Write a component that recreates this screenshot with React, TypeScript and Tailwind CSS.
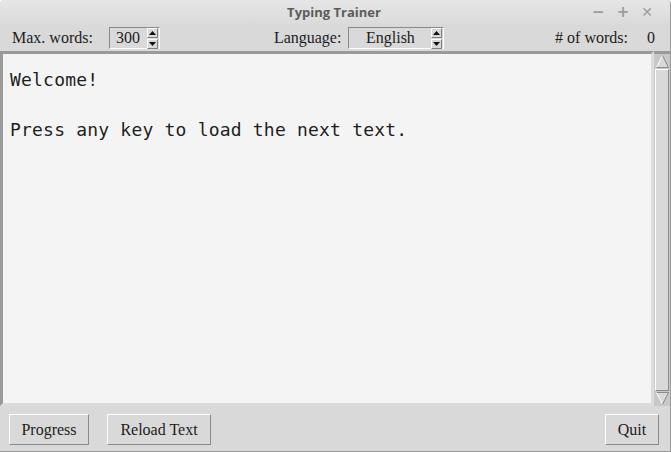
import React from "react"

const serif = { fontFamily: '"Liberation Serif", "Times New Roman", serif' }

function Arrows() {
  return (
    <div className="flex flex-col gap-[1px] w-[11px]">
      <div className="h-[10px] bg-[#d9d9d9] border-t border-l border-white border-r border-b border-r-[#7f7f7f] border-b-[#7f7f7f] flex items-center justify-center">
        <svg width="7" height="4" viewBox="0 0 7 4">
          <polygon points="3.5,0 7,4 0,4" fill="#111" />
        </svg>
      </div>
      <div className="h-[10px] bg-[#d9d9d9] border-t border-l border-white border-r border-b border-r-[#7f7f7f] border-b-[#7f7f7f] flex items-center justify-center">
        <svg width="7" height="4" viewBox="0 0 7 4">
          <polygon points="0,0 7,0 3.5,4" fill="#111" />
        </svg>
      </div>
    </div>
  )
}

function ScrollArrow({ down }: { down?: boolean }) {
  return (
    <div className="h-[13px] flex items-center justify-center">
      <svg width="13" height="13" viewBox="0 0 13 13">
        {down ? (
          <>
            <polygon points="0.5,0.5 12.5,0.5 6.5,12.5" fill="#d9d9d9" />
            <line x1="0.5" y1="0.5" x2="12.5" y2="0.5" stroke="#8a8a8a" />
            <line x1="0.5" y1="0.5" x2="6.5" y2="12.5" stroke="#fafafa" />
            <line x1="12.5" y1="0.5" x2="6.5" y2="12.5" stroke="#8a8a8a" />
          </>
        ) : (
          <>
            <polygon points="6.5,0.5 12.5,12.5 0.5,12.5" fill="#d9d9d9" />
            <line x1="6.5" y1="0.5" x2="0.5" y2="12.5" stroke="#fafafa" />
            <line x1="6.5" y1="0.5" x2="12.5" y2="12.5" stroke="#8a8a8a" />
            <line x1="0.5" y1="12.5" x2="12.5" y2="12.5" stroke="#8a8a8a" />
          </>
        )}
      </svg>
    </div>
  )
}

function TkButton({ label, width }: { label: string; width: string }) {
  return (
    <button
      className={`${width} h-[31px] bg-[#d9d9d9] border border-white border-r-[#8a8a8a] border-b-[#8a8a8a] text-[16px] text-[#1c1c1c] flex items-center justify-center`}
      style={serif}
    >
      {label}
    </button>
  )
}

export default function App() {
  return (
    <div className="w-[671px] h-[452px] bg-[#d9d9d9] flex flex-col border-r border-b border-[#9a9a9a] overflow-hidden rounded-t-[4px]">
      {/* title bar */}
      <div className="h-[25px] shrink-0 bg-gradient-to-b from-[#e6e6e6] to-[#dadada] grid grid-cols-[1fr_auto_1fr] items-center">
        <div />
        <div
          className="text-[13px] font-bold text-[#5c5c5c] pr-[2px]"
          style={{ fontFamily: '"Open Sans", "Noto Sans", sans-serif' }}
        >
          Typing Trainer
        </div>
        <div className="flex justify-end items-center gap-[12px] pr-[17px] text-[#9c9c9c] text-[15px] font-bold" style={{ fontFamily: '"DejaVu Sans", sans-serif' }}>
          <span>−</span>
          <span>+</span>
          <span className="text-[14px]">✕</span>
        </div>
      </div>

      {/* toolbar */}
      <div className="h-[26px] shrink-0 flex items-center pl-[12px] pr-[15px] text-[16px] text-[#1c1c1c]" style={serif}>
        <span>Max. words:</span>
        <div className="ml-[16px] w-[51px] h-[22px] border border-[#8a8a8a] border-r-white border-b-white flex items-center pr-[1px]">
          <span className="flex-1 text-right pr-[7px]">300</span>
          <Arrows />
        </div>
        <span className="ml-[114px]">Language:</span>
        <div className="ml-[7px] w-[96px] h-[22px] border border-[#8a8a8a] border-r-white border-b-white flex items-center pr-[1px]">
          <span className="flex-1 text-center">English</span>
          <Arrows />
        </div>
        <span className="ml-auto">#&nbsp;of words:</span>
        <span className="ml-[19px]">0</span>
      </div>

      {/* text area + scrollbar */}
      <div className="h-[355px] shrink-0 flex">
        <div
          className="flex-1 bg-[#f4f4f4] border-t-[3px] border-l-[3px] border-b-[3px] border-r-[3px] border-t-[#9a9a9a] border-l-[#9a9a9a] border-b-[#dcdcdc] border-r-[#dcdcdc] pl-[7px] pt-[13px] text-[18px] leading-[25px] tracking-[0.2px] text-[#1e1e1e] whitespace-pre"
          style={{ fontFamily: '"DejaVu Sans Mono", monospace' }}
        >
          {"Welcome!\n\nPress any key to load the next text."}
        </div>
        <div className="w-[16px] bg-[#c8c8c8] border-t-[3px] border-t-[#9a9a9a] flex flex-col p-[1px]">
          <ScrollArrow />
          <div className="flex-1 my-[1px] bg-[#d9d9d9] border border-white border-r-[#8a8a8a] border-b-[#8a8a8a]" />
          <ScrollArrow down />
        </div>
      </div>

      {/* bottom buttons */}
      <div className="flex-1 flex items-start pt-[8px] pl-[9px] pr-[11px]">
        <TkButton label="Progress" width="w-[80px]" />
        <div className="ml-[18px]">
          <TkButton label="Reload Text" width="w-[104px]" />
        </div>
        <div className="ml-auto">
          <TkButton label="Quit" width="w-[54px]" />
        </div>
      </div>
    </div>
  )
}
